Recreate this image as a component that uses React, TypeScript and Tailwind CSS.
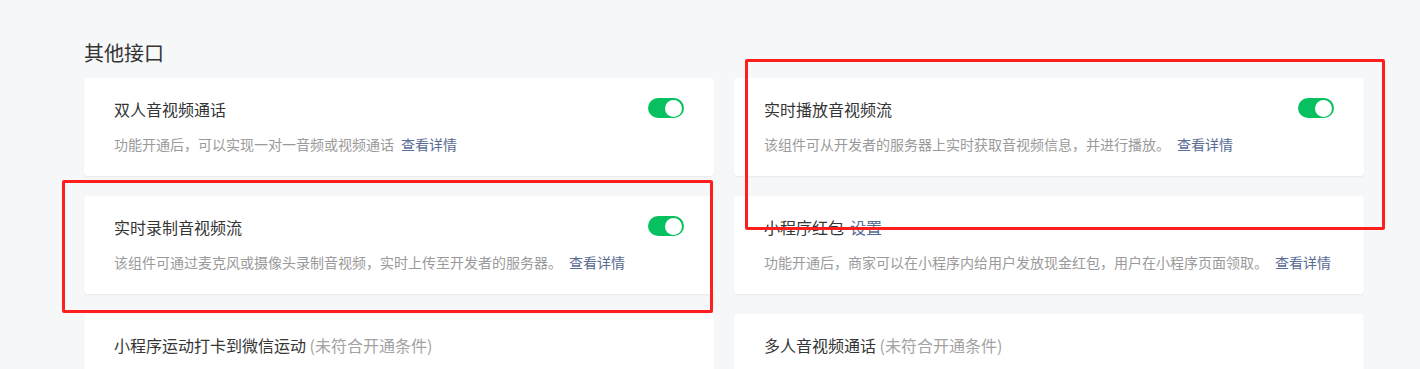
import React from "react";

const Toggle = () => (
  <div className="relative h-5 w-9 shrink-0 rounded-full bg-[#07c160]">
    <div className="absolute right-[2px] top-[1.5px] size-[17px] rounded-full bg-white" />
  </div>
);

type CardProps = {
  title: string;
  titleLink?: string;
  titleNote?: string;
  desc?: string;
  toggle?: boolean;
};

const Card = ({ title, titleLink, titleNote, desc, toggle }: CardProps) => (
  <div className="h-[98px] rounded-[4px] bg-white px-[30px] pt-[20px] shadow-[0_1px_2px_rgba(0,0,0,0.06)]">
    <div className="flex items-start justify-between">
      <div className="text-[16px] leading-[22px] text-[#353535]">
        {title}
        {titleLink && <span className="ml-[6px] text-[#576b95]">{titleLink}</span>}
        {titleNote && <span className="text-[#a3a3a3]"> {titleNote}</span>}
      </div>
      {toggle && <Toggle />}
    </div>
    {desc && (
      <div className="mt-[14px] text-[14px] leading-[20px] text-[#9a9a9a]">
        {desc}
        <span className="ml-[7px] text-[#576b95]">查看详情</span>
      </div>
    )}
  </div>
);

export default function App() {
  return (
    <div
      className="relative h-[369px] w-[1420px] overflow-hidden bg-[#f6f7f9]"
      style={{ fontFamily: '"Noto Sans CJK SC", "Noto Sans", sans-serif' }}
    >
      <div className="pl-[84px] pr-[56px] pt-[39px]">
        <div className="mb-[11px] text-[20px] leading-[28px] text-[#353535]">其他接口</div>
        <div className="grid grid-cols-2 gap-x-[20px] gap-y-[20px]">
          <Card title="双人音视频通话" desc="功能开通后，可以实现一对一音频或视频通话" toggle />
          <Card title="实时播放音视频流" desc="该组件可从开发者的服务器上实时获取音视频信息，并进行播放。" toggle />
          <Card title="实时录制音视频流" desc="该组件可通过麦克风或摄像头录制音视频，实时上传至开发者的服务器。" toggle />
          <Card title="小程序红包" titleLink="设置" desc="功能开通后，商家可以在小程序内给用户发放现金红包，用户在小程序页面领取。" />
          <Card title="小程序运动打卡到微信运动" titleNote="(未符合开通条件)" />
          <Card title="多人音视频通话" titleNote="(未符合开通条件)" />
        </div>
      </div>
      <div className="pointer-events-none absolute left-[745px] top-[59px] h-[171px] w-[640px] rounded-[2px] border-[3px] border-[#fe1e1e]" />
      <div className="pointer-events-none absolute left-[62px] top-[180px] h-[133px] w-[651px] rounded-[2px] border-[3px] border-[#fe1e1e]" />
    </div>
  );
}
